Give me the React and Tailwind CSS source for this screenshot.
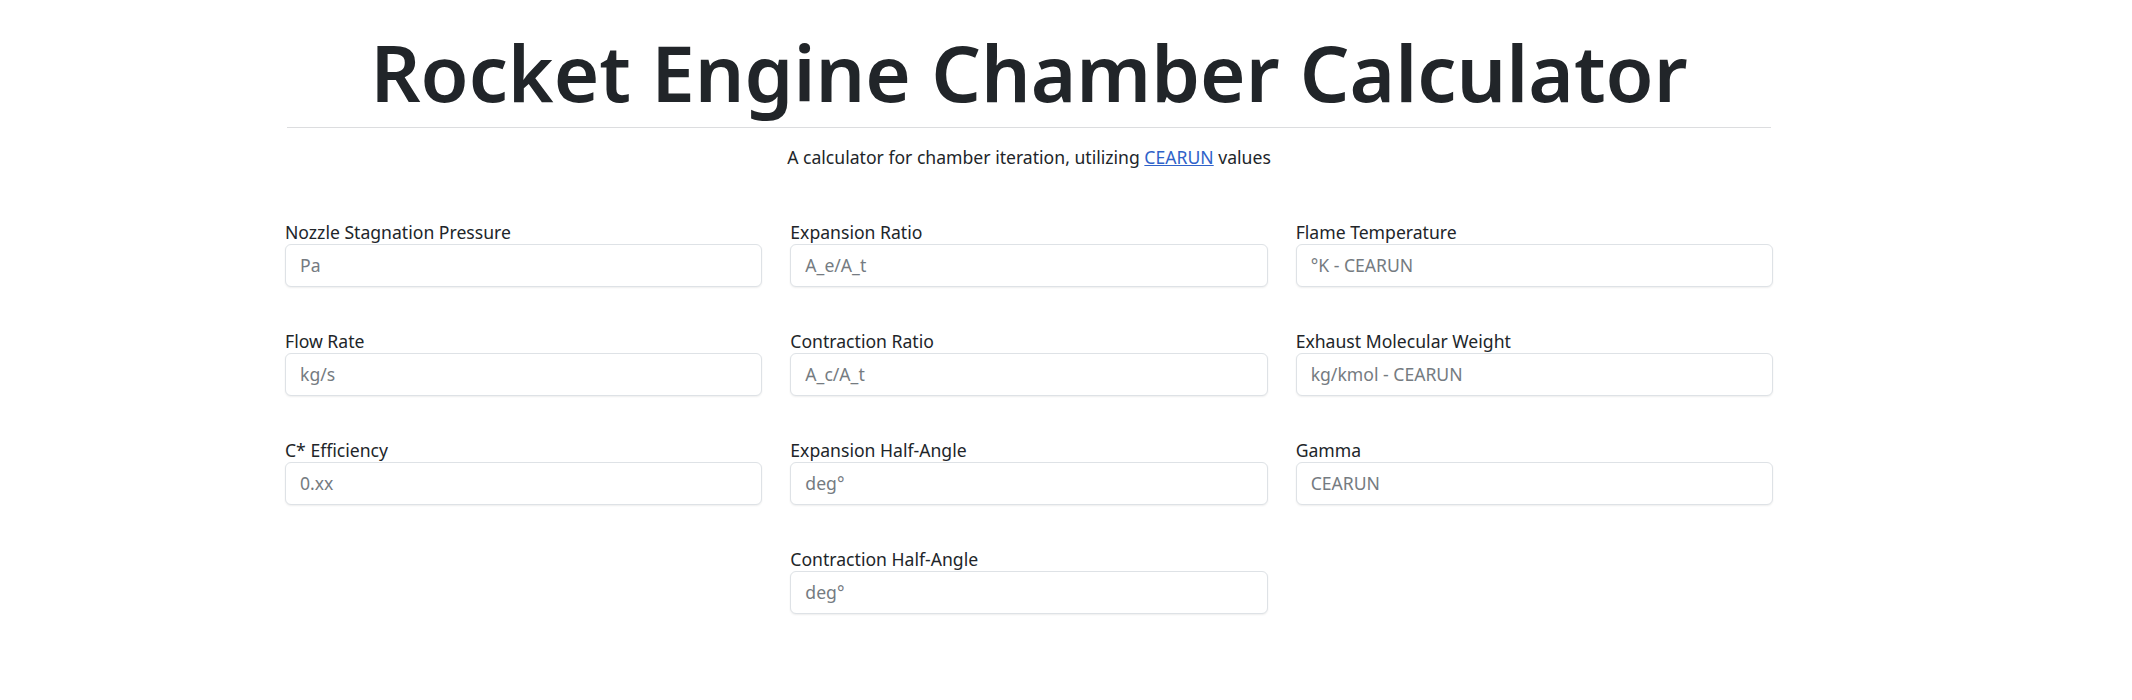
import { useState } from "react";

const columns = [
  [
    { name: "pressure", label: "Nozzle Stagnation Pressure", placeholder: "Pa" },
    { name: "flowRate", label: "Flow Rate", placeholder: "kg/s" },
    { name: "efficiency", label: "C* Efficiency", placeholder: "0.xx" }
  ],
  [
    { name: "expansionRatio", label: "Expansion Ratio", placeholder: "A_e/A_t" },
    { name: "contractionRatio", label: "Contraction Ratio", placeholder: "A_c/A_t" },
    { name: "expansionAngle", label: "Expansion Half-Angle", placeholder: "deg°" },
    { name: "contractionAngle", label: "Contraction Half-Angle", placeholder: "deg°" }
  ],
  [
    { name: "flameTemp", label: "Flame Temperature", placeholder: "°K - CEARUN" },
    { name: "molWeight", label: "Exhaust Molecular Weight", placeholder: "kg/kmol - CEARUN" },
    { name: "gamma", label: "Gamma", placeholder: "CEARUN" }
  ]
];

export default function App() {
  const [values, setValues] = useState({});

  const handleChange = (e) => {
    setValues({ ...values, [e.target.name]: e.target.value });
  };

  return (
    <div className="min-h-[700px] bg-white text-[#212529] font-['Noto_Sans',sans-serif]">
      <div className="ml-[285px] w-[1488px]">
        <h1 className="pt-[26px] text-center text-[78px] font-semibold leading-[1.2]">
          Rocket Engine Chamber Calculator
        </h1>
        <hr className="mt-[7px] mx-[2px] border-0 border-t border-[#dcdddf]" />
        <p className="mt-[16px] text-center text-[17.6px] leading-[26px]">
          A calculator for chamber iteration, utilizing{" "}
          <a href="#" className="text-[#2f62c9] underline">CEARUN</a> values
        </p>

        <div className="mt-[50px] grid grid-cols-3 gap-x-[28px]">
          {columns.map((col, i) => (
            <div key={i} className="flex flex-col">
              {col.map((f) => (
                <div key={f.name} className="mb-[42px]">
                  <label className="block text-[17.6px] leading-[24px]">{f.label}</label>
                  <input
                    type="text"
                    name={f.name}
                    value={values[f.name] || ""}
                    onChange={handleChange}
                    placeholder={f.placeholder}
                    className="block h-[43px] w-full rounded-[6px] border border-[#dee2e6] bg-white px-[14px] text-[17.6px] shadow-[0_1px_2px_rgba(0,0,0,0.07)] outline-none placeholder:text-[#757b81]"
                  />
                </div>
              ))}
            </div>
          ))}
        </div>
      </div>
    </div>
  );
}
